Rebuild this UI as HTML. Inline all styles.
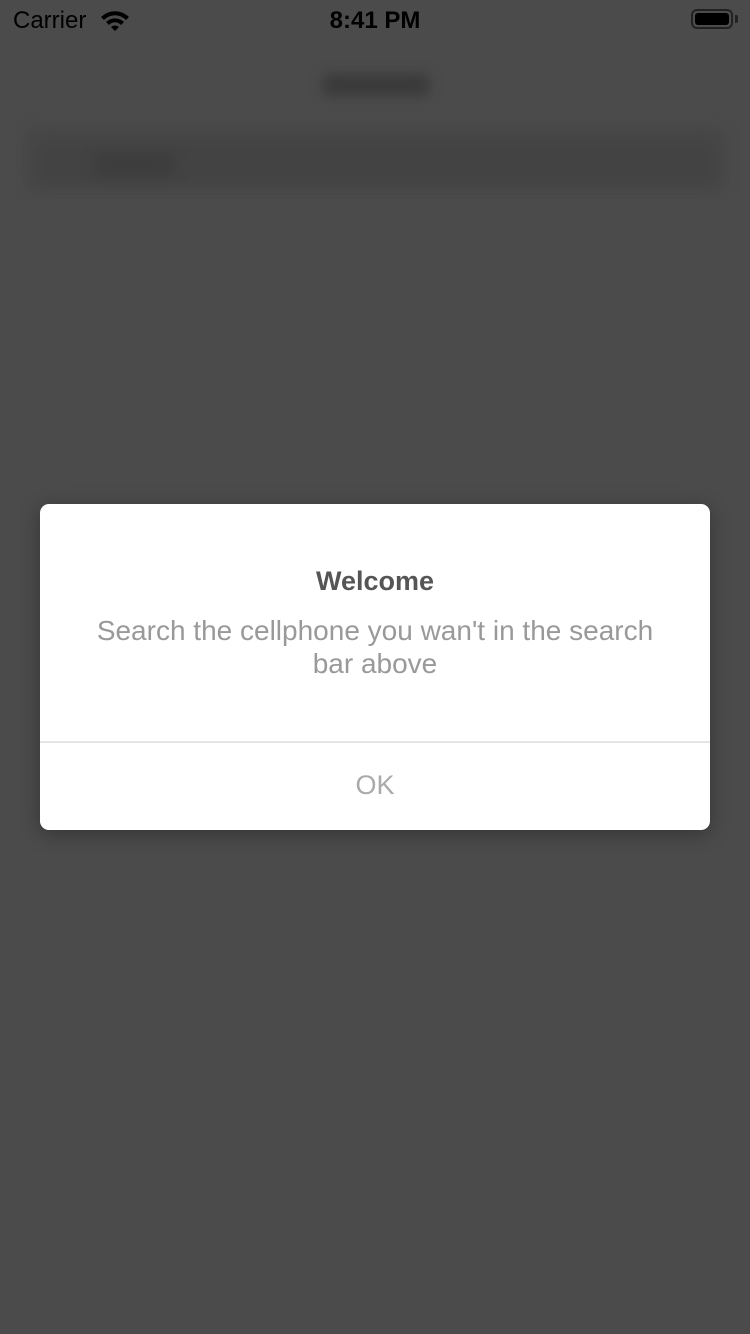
<!DOCTYPE html>
<html><head><meta charset="utf-8"><style>
html,body{margin:0;padding:0}
body{width:750px;height:1334px;background:#4b4b4b;position:relative;overflow:hidden;font-family:"Liberation Sans",sans-serif}
.sb{position:absolute;top:0;left:0;width:750px;height:40px;color:#000;font-size:24px}
.blur{filter:blur(6px)}
.dlg{position:absolute;left:40px;top:504px;width:670px;height:326px;background:#fff;border-radius:9px;box-shadow:0 4px 20px rgba(0,0,0,.3)}
</style></head><body>
<div class="sb">
<div style="position:absolute;left:13px;top:7px">Carrier</div>
<svg style="position:absolute;left:99px;top:9px" width="32" height="22" viewBox="0 0 32 22"><path d="M2 8 A20 20 0 0 1 30 8 L27 11 A15 15 0 0 0 5 11Z M7 13 A13 13 0 0 1 25 13 L22 16 A8 8 0 0 0 10 16Z M12 18 A6 6 0 0 1 20 18 L16 22Z" fill="#000"/></svg>
<div style="position:absolute;left:0;width:750px;text-align:center;top:7px;font-weight:bold">8:41 PM</div>
<div style="position:absolute;left:691px;top:9px;width:42px;height:20px;border:2px solid #222;border-radius:6px;box-sizing:border-box;padding:2px"><div style="background:#000;width:100%;height:100%;border-radius:3px"></div></div>
<div style="position:absolute;left:735px;top:15px;width:3px;height:8px;background:#222;border-radius:0 2px 2px 0"></div>
</div>
<div class="blur" style="position:absolute;left:323px;top:74px;width:106px;height:22px;background:#3a3a3a;border-radius:6px"></div>
<div class="blur" style="position:absolute;left:24px;top:126px;width:702px;height:66px;background:#474747;border-radius:10px"></div>
<div class="blur" style="position:absolute;left:36px;top:140px;width:680px;height:44px;background:#434343;border-radius:10px"></div>
<div class="blur" style="position:absolute;left:95px;top:153px;width:80px;height:22px;background:#3d3d3d;border-radius:6px"></div>
<div class="dlg">
<div style="position:absolute;top:62px;width:670px;text-align:center;font-size:27px;font-weight:bold;color:#555">Welcome</div>
<div style="position:absolute;top:110px;left:40px;width:590px;text-align:center;font-size:28px;line-height:33px;color:#999">Search the cellphone you wan't in the search bar above</div>
<div style="position:absolute;top:237px;left:0;width:670px;height:2px;background:#e5e5e5"></div>
<div style="position:absolute;top:266px;width:670px;text-align:center;font-size:27px;color:#aaa">OK</div>
</div>
</body></html>
